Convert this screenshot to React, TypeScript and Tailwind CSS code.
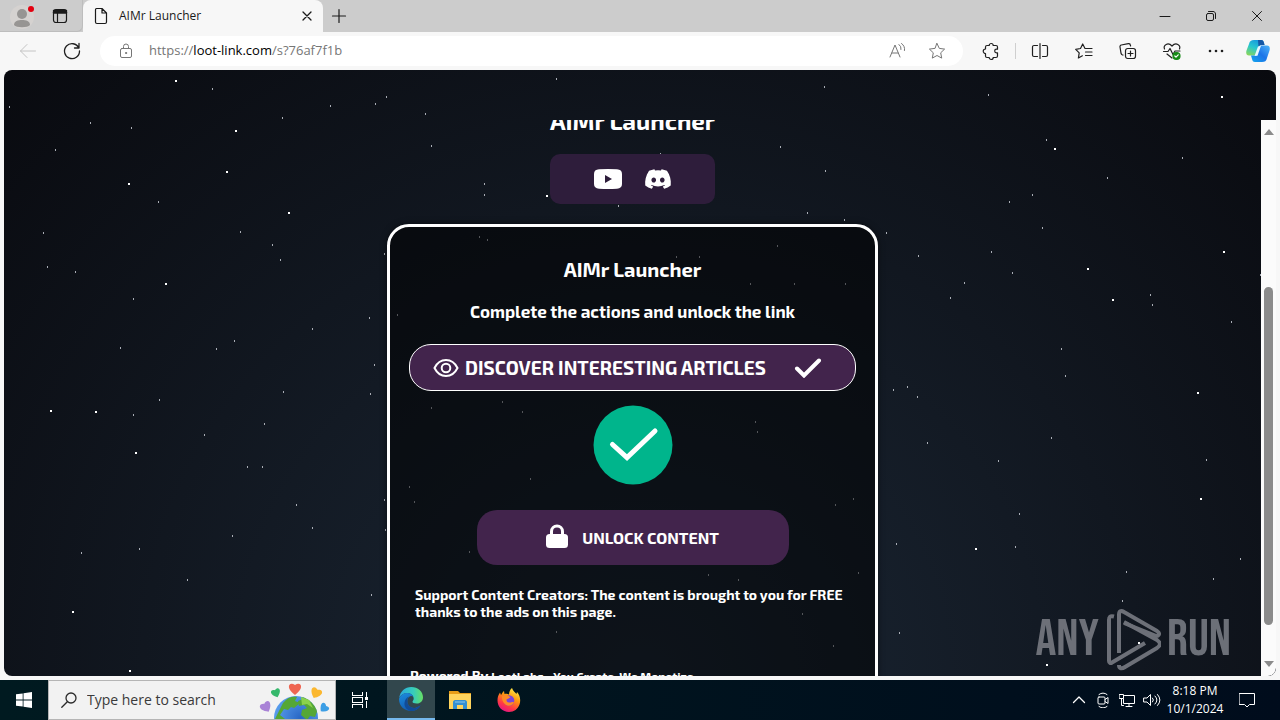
import type { ReactNode } from 'react';
import { FaDiscord } from 'react-icons/fa';

type IconProps = { children: ReactNode; className?: string; box?: string; stroke?: number };

function Icon({ children, className = 'size-5', box = '0 0 20 20', stroke = 1 }: IconProps) {
  return (
    <svg
      aria-hidden="true"
      viewBox={box}
      className={`shrink-0 ${className}`}
      fill="none"
      stroke="currentColor"
      strokeWidth={stroke}
      strokeLinecap="round"
      strokeLinejoin="round"
    >
      {children}
    </svg>
  );
}

const brightStars = [
  [176, 81], [236, 131], [227, 172], [129, 184], [289, 213], [166, 284], [51, 411], [96, 412], [136, 453],
  [130, 671], [73, 612], [547, 196], [1222, 97], [1055, 149], [1224, 252], [1088, 269], [1113, 300],
  [1198, 393], [1201, 499], [976, 549], [1047, 665], [1139, 643],
];

const smallStars = [
  [212, 89], [9, 107], [90, 123], [330, 106], [375, 104], [386, 97], [282, 118], [556, 79], [824, 87], [988, 95],
  [431, 146], [484, 184], [484, 195], [425, 114], [131, 128], [55, 150], [158, 202], [43, 233], [47, 267],
  [240, 232], [272, 245], [280, 260], [75, 272], [133, 299], [312, 329], [369, 318], [234, 341], [216, 349],
  [120, 348], [374, 365], [370, 394], [283, 392], [133, 415], [204, 435], [159, 400], [384, 500], [385, 530],
  [264, 424], [247, 467], [262, 467], [296, 505], [312, 528], [232, 536], [81, 553], [187, 580], [139, 549],
  [371, 595], [780, 147], [825, 171], [807, 213], [844, 220], [1046, 140], [1182, 158], [1107, 178], [1009, 202],
  [1032, 195], [1042, 228], [886, 233], [918, 256], [991, 252], [1012, 273], [964, 283], [1150, 295], [1260, 275],
  [950, 298], [1152, 305], [1231, 322], [1061, 349], [1065, 376], [893, 390], [907, 387], [917, 397], [927, 443],
  [1051, 438], [998, 461], [1206, 460], [1019, 514], [1015, 547], [1126, 572], [896, 544], [1240, 559],
  [899, 633], [1213, 579], [1122, 601], [660, 154], [618, 206], [479, 237], [487, 240], [777, 246], [676, 257],
  [699, 257], [750, 284], [794, 284], [845, 284], [397, 315], [431, 408], [502, 402], [522, 412], [755, 422],
  [757, 432], [409, 487], [414, 502], [530, 479], [835, 505], [853, 499], [469, 552], [708, 575], [738, 580],
  [858, 573], [802, 614], [833, 646], [556, 632], [384, 254],
];

function Stars() {
  return (
    <svg aria-hidden="true" className="absolute inset-0 size-full" shapeRendering="crispEdges">
      {smallStars.map(([x, y]) => (
        <rect key={`${x}-${y}`} x={x - 4} y={y - 71} width="1" height="2" fill="#a9adb5" />
      ))}
      {brightStars.map(([x, y]) => (
        <rect key={`${x}-${y}`} x={x - 5} y={y - 71} width="2" height="2" fill="#fff" />
      ))}
    </svg>
  );
}

function TitleBar() {
  return (
    <header className="flex h-8 shrink-0 items-stretch bg-[#cccccc] text-[#1a1a1a]">
      <div className="flex w-[83px] items-center gap-6 rounded-br-md border-r border-b border-[#bdbdbd] pl-2.5">
        <button aria-label="Profile" className="shrink-0">
          <svg viewBox="0 0 24 28" className="h-7 w-6">
            <circle cx="12" cy="15" r="12" fill="#d5d2d0" />
            <circle cx="12" cy="12" r="5" fill="#979593" />
            <path d="M4 23c0-4 4-5 8-5s8 1 8 5c-2 3-14 3-16 0z" fill="#979593" />
            <circle cx="21" cy="7" r="3" fill="#e3000f" />
          </svg>
        </button>
        <button aria-label="Tab actions menu" className="-ml-2">
          <Icon className="size-5" stroke={1.2}>
            <rect x="3.500" y="3.500" width="13" height="13" rx="2.500" />
            <path d="M4 5h12M4 6.500h12" strokeWidth="2.500" />
            <path d="M7.500 7v9" />
          </Icon>
        </button>
      </div>
      <div className="flex w-60 items-center rounded-t-lg bg-[#f7f7f7] pr-2 pl-2">
        <Icon className="size-5" stroke={1.2}>
          <path d="M5.500 2.500h5.500l4.500 4.500v9c0 .8-.7 1.500-1.500 1.500H6c-.8 0-1.500-.7-1.500-1.500V4c0-.8.500-1.500 1-1.500zM11 2.700V7h4.300" />
        </Icon>
        <span className="ml-2 flex-1 text-xs">AIMr Launcher</span>
        <button aria-label="Close tab">
          <Icon className="size-4" box="0 0 16 16" stroke={1.3}>
            <path d="M4 4l8 8M12 4l-8 8" />
          </Icon>
        </button>
      </div>
      <button aria-label="New tab" className="pl-2">
        <Icon className="size-4" box="0 0 16 16" stroke={1.200}>
          <path d="M8 1.500v13M1.500 8h13" />
        </Icon>
      </button>
      <div className="ml-auto flex items-center">
        <button aria-label="Minimize" className="flex w-[46px] justify-center">
          <Icon className="size-3" box="0 0 12 12"><path d="M1 6.500h10" /></Icon>
        </button>
        <button aria-label="Restore" className="flex w-[46px] justify-center">
          <Icon className="size-3" box="0 0 12 12">
            <rect x="1.500" y="3.500" width="7" height="7" rx="1.500" />
            <path d="M3.500 1.500H8c1.500 0 2.500 1 2.500 2.500v4.500" />
          </Icon>
        </button>
        <button aria-label="Close" className="flex w-[46px] justify-center">
          <Icon className="size-3" box="0 0 12 12"><path d="M1.500 1.500l9 9M10.500 1.500l-9 9" /></Icon>
        </button>
      </div>
    </header>
  );
}

function Toolbar() {
  return (
    <nav aria-label="Browser toolbar" className="flex h-[38px] shrink-0 items-center bg-[#f7f7f7] pl-[18px] text-[#1f1f1f]">
      <button aria-label="Back" className="text-[#c4c4c4]">
        <Icon className="size-5"><path d="M2.500 10h15M9 3.500L2.500 10 9 16.500" /></Icon>
      </button>
      <button aria-label="Refresh" className="ml-6">
        <Icon className="size-5" stroke={1.3}>
          <path d="M16.800 7A7.500 7.500 0 1 0 17.500 10M17 2.500V7h-4.500" />
        </Icon>
      </button>
      <div className="ml-[18px] flex h-[30px] flex-1 items-center rounded-full bg-white px-4 text-[#767676]">
        <button aria-label="Site information">
          <Icon className="size-5">
            <rect x="4.500" y="7.500" width="11" height="9" rx="1.500" />
            <path d="M7.500 7.500V5.500a2.500 2.500 0 0 1 5 0v2" />
            <circle cx="10" cy="12" r=".6" fill="currentColor" />
          </Icon>
        </button>
        <div className="ml-[13px] flex-1 text-[13px]">
          https://<span className="text-black">loot-link.com</span>/s?76af7f1b
        </div>
        <button aria-label="Read aloud">
          <Icon className="size-5">
            <path d="M3 16L8 4l5 12M5 12h6M12 3.500a5 5 0 0 1 2 5M14.500 2.500a7 7 0 0 1 3 7" />
          </Icon>
        </button>
        <button aria-label="Add to favorites" className="ml-5">
          <Icon className="size-5">
            <path d="M10 2.500l2.300 4.900 5.300.7-3.900 3.700 1 5.300L10 14.500l-4.700 2.600 1-5.300-3.900-3.700 5.300-.7z" />
          </Icon>
        </button>
      </div>
      <button aria-label="Extensions" className="ml-[18px]">
        <Icon className="size-5" stroke={1.2}>
          <path d="M6 4.500h2.200a2 2 0 0 1 4 0H15c.8 0 1.500.7 1.500 1.500v2.200h-1a1.800 1.800 0 0 0 0 3.600h1V15c0 .8-.7 1.500-1.500 1.500h-2.800a2 2 0 0 1-4 0H6c-.8 0-1.500-.7-1.500-1.500v-2.500a2.200 2.200 0 0 1 0-4.500V6c0-.8.700-1.500 1.500-1.500z" />
        </Icon>
      </button>
      <div className="ml-3.5 h-4 w-px bg-[#cfcfcf]" />
      <div className="ml-3.5 flex items-center gap-6">
        <button aria-label="Split screen">
          <Icon className="size-5" stroke={1.2}>
            <path d="M7.500 4.500H4C3.200 4.500 2.500 5 2.500 6v8c0 1 .7 1.500 1.500 1.500h3.500M12.500 4.500H16c.8 0 1.500.5 1.500 1.500v8c0 1-.7 1.500-1.500 1.500h-3.500M10 2.500v15" />
          </Icon>
        </button>
        <button aria-label="Favorites">
          <Icon className="size-5" stroke={1.2}>
            <path d="M16 7.500h-5L8.700 3 6.500 7.500l-4.800.8 3.500 3.500-.8 5.200 4-2.200M12 7.500h6M11.500 11H18M11.500 14.500H18" />
          </Icon>
        </button>
        <button aria-label="Collections">
          <Icon className="size-5" stroke={1.2}>
            <rect x="7.500" y="7.500" width="10" height="10" rx="2.200" />
            <path d="M12.500 10v5M10 12.500h5M5 14l-.8-.2c-.8-.3-1-1-1.200-1.600L2 6c-.2-1 .3-1.800 1.300-2l7-1.400c1-.2 1.800.3 2 1.300l.3 1.100" />
          </Icon>
        </button>
        <button aria-label="Browser essentials">
          <Icon className="size-5" stroke={1.2}>
            <path d="M2.500 8C1 4 6 .8 10 5c4-4.200 9-1 7.500 3M1.500 10.500H6l2-3 3 6 2-3.500h5M5 13l5 4" />
            <circle cx="14.500" cy="15" r="3.500" fill="#168a16" stroke="#168a16" />
            <path d="M12.800 15l1.200 1.200 2.200-2.400" stroke="#fff" />
          </Icon>
        </button>
        <button aria-label="Settings and more">
          <Icon className="size-5">
            <g fill="currentColor" stroke="none">
              <circle cx="4" cy="10" r="1.300" /><circle cx="10" cy="10" r="1.300" /><circle cx="16" cy="10" r="1.300" />
            </g>
          </Icon>
        </button>
      </div>
      <button aria-label="Copilot" className="mr-2.5 ml-5">
        <svg viewBox="0 0 24 24" className="size-6">
          <defs>
            <linearGradient id="copA" x1="0.700" y1="0" x2="0.200" y2="1">
              <stop offset="0" stopColor="#1595df" /><stop offset=".5" stopColor="#27c7cf" /><stop offset="1" stopColor="#87d65d" />
            </linearGradient>
            <linearGradient id="copB" x1="1" y1="0" x2="0" y2="1">
              <stop offset="0" stopColor="#4eb6fa" /><stop offset=".5" stopColor="#1d74e8" /><stop offset="1" stopColor="#12a7ee" />
            </linearGradient>
          </defs>
          <path d="M8 1h7c2 0 2.500 1 3 3l.5 2h-3c-2 0-2.500 1-3 3l-1.500 5c-.7 2-1.500 2.500-3.500 2.500H3c-2.500 0-3.300-2-2.500-5L3 5c.8-3 2-4 5-4z" fill="url(#copA)" />
          <path d="M12 1h3c2 0 2.500 1 3 3l.5 2h-3c-1.500 0-2.300.8-3 2z" fill="#1557a5" />
          <path d="M16 23H9c-2 0-2.500-1-3-3l-1-3.500h3c2 0 2.700-1 3.300-3L13 9c.7-2 1.500-2.500 3.500-2.500H21c2.500 0 3.300 2 2.500 5L21 19c-.8 3-2 4-5 4z" fill="url(#copB)" />
          <path d="M12 7.500l3-.8-3.500 10-3 .3z" fill="#e8f9ff" />
        </svg>
      </button>
    </nav>
  );
}

function Scrollbar() {
  return (
    <div aria-hidden="true" className="flex w-[15px] shrink-0 flex-col items-center rounded-br-lg bg-[#fbfbfb] py-2">
      <svg viewBox="0 0 10 8" className="h-2 w-2.5"><path d="M5 1l5 6H0z" fill="#8b8b8b" /></svg>
      <div className="grow-[151]" />
      <div className="w-[9px] grow-[338] rounded-full bg-[#8b8b8b]" />
      <div className="grow-[35]" />
      <svg viewBox="0 0 10 8" className="h-2 w-2.5"><path d="M5 7L0 1h10z" fill="#8b8b8b" /></svg>
    </div>
  );
}

function Watermark() {
  return (
    <div className="absolute right-[45px] bottom-0 flex h-[72px] items-center gap-1.5 font-['Bebas_Neue','Oswald','Roboto_Condensed','Open_Sans_Condensed','Liberation_Sans_Narrow','Liberation_Sans',sans-serif] text-[52px] leading-none text-[#777a82] opacity-90">
      <span>ANY</span>
      <svg aria-hidden="true" viewBox="0 0 56 64" className="h-16 w-14" fill="none" stroke="currentColor" strokeWidth="4" strokeLinejoin="round">
        <path d="M9 8.500C5 7.500 4 9 4 12v41c0 2 1.500 2.500 3 1.500L40 35" />
        <path d="M14 45V7c0-4 2-5 5-3l33 19c4 3 1 6-2 4.500L19 15" />
        <path d="M14 57c0 4 3 4 6 2l32-19c4-3 4-5 0-8L19 14" />
      </svg>
      <span>RUN</span>
    </div>
  );
}

function WebPage() {
  return (
    <div className="relative mx-1 mb-1 flex min-h-0 flex-1 overflow-hidden rounded-lg bg-[radial-gradient(ellipse_at_bottom,#1b2735_0%,#090a0f_100%)] pt-[50px] font-['Exo_2','Open_Sans','Noto_Sans',sans-serif] text-white">
      <Stars />
      <main className="relative flex flex-1 flex-col items-center overflow-hidden">
        <h1 className="-mt-4 shrink-0 text-2xl leading-[34px] font-bold">AIMr Launcher</h1>
        <div className="mt-4 flex h-[50px] w-[165px] shrink-0 items-center justify-center gap-[22px] rounded-[10px] bg-[#2e1d3b]">
          <a href="#youtube" aria-label="YouTube">
            <svg viewBox="0 0 28 20" className="h-5 w-7">
              <path fillRule="evenodd" fill="#fff" d="M5 .3Q14-.3 23 .3Q28 .6 28 5v10q0 4.400-5 4.700q-9 .6-18 0Q0 19.400 0 15V5Q0 .6 5 .3zM11 6v8l7-4z" />
            </svg>
          </a>
          <a href="#discord" aria-label="Discord"><FaDiscord className="size-7" /></a>
        </div>
        <section className="mt-5 flex w-[491px] max-w-full shrink-0 flex-col rounded-[22px] border-[3px] border-white bg-black/50 px-[19px] shadow-[0_0_6px_#00000080]">
          <h2 className="mt-[26px] text-center text-[20px] leading-8 font-bold">AIMr Launcher</h2>
          <p className="mt-3 text-center text-[17px] leading-7 font-bold">Complete the actions and unlock the link</p>
          <button className="mt-[19px] flex h-[47px] items-center rounded-[22px] border border-white bg-[#42244c] px-[23px]">
            <svg aria-hidden="true" viewBox="0 0 26 20" className="h-5 w-[26px] shrink-0" fill="none" stroke="#fff" strokeWidth="2">
              <path d="M1.500 10C4 5 8 2 13 2s9 3 11.500 8C22 15 18 18 13 18S4 15 1.500 10z" />
              <circle cx="13" cy="10" r="4.300" />
            </svg>
            <span className="ml-1.5 text-[19px] leading-6 font-bold whitespace-nowrap">DISCOVER INTERESTING ARTICLES</span>
            <svg aria-hidden="true" viewBox="0 0 28 20" className="ml-auto mr-2.5 h-5 w-7 shrink-0" fill="none" stroke="#fff" strokeWidth="4" strokeLinecap="round">
              <path d="M3 10.500l7 7L25 2.500" />
            </svg>
          </button>
          <svg role="img" aria-label="Completed" viewBox="0 0 80 80" className="mt-3.5 size-20 self-center">
            <circle cx="40" cy="40" r="39.500" fill="#00b58c" />
            <path d="M19.500 39.500l14.500 13L62 26" fill="none" stroke="#fff" strokeWidth="5" strokeLinecap="round" />
          </svg>
          <button className="mt-[25px] flex h-[55px] w-[312px] items-center justify-center gap-3.5 self-center rounded-[20px] bg-[#42244c]">
            <svg aria-hidden="true" viewBox="0 0 22 24" className="mb-1 h-6 w-[22px]">
              <rect y="10" width="22" height="14" rx="3.500" fill="#fff" />
              <path d="M5.500 12V7.500a5.500 5.500 0 0 1 11 0V12" fill="none" stroke="#fff" strokeWidth="3" />
            </svg>
            <span className="text-base leading-5 font-bold">UNLOCK CONTENT</span>
          </button>
          <p className="mt-[21px] px-1.5 text-sm leading-[17px] font-bold">
            Support Content Creators: The content is brought to you for FREE thanks to the ads on this page.
          </p>
          <p className="mt-[46px] pb-12 pl-px text-sm leading-5 font-bold">
            Powered By <span className="text-xs">LootLabs - You Create, We Monetize</span>
          </p>
        </section>
      </main>
      <Scrollbar />
      <Watermark />
    </div>
  );
}

function SearchGlobe() {
  const heart = 'M0 6C-10-1-6-8 0-4C6-8 10-1 0 6z';
  return (
    <svg aria-hidden="true" viewBox="0 0 72 38" className="h-[38px] w-[72px] shrink-0">
      <defs>
        <radialGradient id="globe" cx=".6" cy=".5" r=".7">
          <stop offset="0" stopColor="#2866c4" /><stop offset="1" stopColor="#62a7f5" />
        </radialGradient>
        <clipPath id="globeClip"><circle cx="37" cy="37" r="22" /></clipPath>
      </defs>
      <circle cx="37" cy="37" r="22" fill="url(#globe)" />
      <g fill="#55a735" clipPath="url(#globeClip)">
        <path d="M24 22q7-8 14-6l-2 4 5 2-6 5-3-1-3 3-4-1-4 6 5 4-1 4H14zM43 15l10 4 6 9-3 8-5-1-3 4-6-5 1-5 5-2-3-3-5 1-1-5 5-2z" />
      </g>
      <path d="M42 16l8 3 4 8-6-4-5 1z" fill="#8bd24b" />
      <path d={heart} transform="translate(36 8)" fill="#ef6552" />
      <path d={heart} transform="translate(17 12) rotate(-20) scale(.75)" fill="#36b86c" />
      <path d={heart} transform="translate(57 12) rotate(25) scale(.9)" fill="#fbb72f" />
      <path d={heart} transform="translate(7 26) rotate(-30) scale(.9)" fill="#a983d6" />
      <path d={heart} transform="translate(65 27) rotate(45) scale(.75)" fill="#3c9ee5" />
    </svg>
  );
}

function Taskbar() {
  return (
    <footer className="flex h-10 shrink-0 items-stretch bg-linear-to-r from-[#001a20] to-[#000c1c] text-white">
      <button aria-label="Start" className="flex w-12 items-center justify-center">
        <svg viewBox="0 0 16 16" className="size-4" fill="#fff">
          <path d="M0 2.300L6.700 1.400V7.600H0zM7.500 1.200L16 0v7.600H7.500zM0 8.400h6.700v6.200L0 13.700zM7.500 8.400H16V16l-8.500-1.200z" />
        </svg>
      </button>
      <label className="flex w-72 items-center overflow-hidden border border-[#b5b5b5] bg-[#f2f2f2] pl-3 text-[#2b2b2b]">
        <Icon className="size-4" box="0 0 16 16" stroke={1.3}>
          <circle cx="10" cy="6" r="5" /><path d="M6.300 9.700L.8 15.200" />
        </Icon>
        <input
          type="text"
          aria-label="Search"
          placeholder="Type here to search"
          className="ml-2.5 min-w-0 flex-1 bg-transparent text-sm outline-none placeholder:text-[#3a3a3a]"
        />
        <SearchGlobe />
        <span className="w-1" />
      </label>
      <button aria-label="Task view" className="flex w-[51px] items-center justify-center pr-1">
        <svg viewBox="0 0 16 16" className="size-4" fill="none" stroke="#fff" shapeRendering="crispEdges">
          <path d="M.5 0v3.500h10V0M.5 16v-3.500h10V16M.5 5.500h10v5H.5zM14.500 0v5M14.500 9v7" />
          <path d="M13 5h3v3h-3z" fill="#fff" stroke="none" />
        </svg>
      </button>
      <button aria-label="Microsoft Edge" className="flex w-12 items-center justify-center border-b-2 border-[#76b9ed] bg-[#32474d]">
        <svg viewBox="0 0 24 24" className="size-6">
          <defs>
            <linearGradient id="edgeTop" x1="0" y1=".5" x2="1" y2=".5">
              <stop offset="0" stopColor="#2aa8df" /><stop offset=".6" stopColor="#37cdbb" /><stop offset="1" stopColor="#67df64" />
            </linearGradient>
            <linearGradient id="edgeBot" x1="0" y1="0" x2="0.500" y2="1">
              <stop offset="0" stopColor="#1b8de0" /><stop offset="1" stopColor="#1259ae" />
            </linearGradient>
          </defs>
          <path d="M.2 11C1 4.500 6 0 12.300 0 19 0 24 4.800 24 10.200c0 4-3 6.300-6.300 6.300-2.700 0-4.200-.8-4.200-1.700 0-.7 1.200-1.300 1.200-3.200C14.700 8.500 12 6 8.300 6 4.500 6 1.500 8 .2 11z" fill="url(#edgeTop)" />
          <path d="M.1 11.500C1.500 8 4.500 6 8.300 6c3 0 5.300 1.600 6 3.700-2-1.500-5.800-.3-6 4.200-.2 4.500 4 7.800 8.300 6.800l4.900-2.300C19.500 22 16 24 12 24 5 24-.5 18.500.1 11.500z" fill="url(#edgeBot)" />
          <path d="M8.300 13.900c-.2 5 5 8.300 9.500 6.500l3.900-2.200C19.500 22 16 24 12 24c-4.500-1-7-4.500-6.500-8 .3-3 2-5.500 4.500-6.500-1 1-1.700 2.500-1.700 4.400z" fill="#124b96" />
        </svg>
      </button>
      <button aria-label="File Explorer" className="flex w-[49px] items-center justify-center">
        <svg viewBox="0 0 22 20" className="h-5 w-[22px]">
          <path d="M0 1h9l2 2h11v16H0z" fill="#e79d18" />
          <path d="M0 4h22v15H0z" fill="#ffd45d" />
          <path d="M4 19v-7c0-1 1-2 2-2h10c1 0 2 1 2 2v7h-4v-4H8v4z" fill="#3590d2" />
          <path d="M6 12h10" stroke="#8dc8ef" strokeWidth="1" />
        </svg>
      </button>
      <button aria-label="Firefox" className="flex w-[49px] items-center justify-center">
        <svg viewBox="0 0 24 24" className="size-6">
          <defs>
            <linearGradient id="fox" x1=".8" y1="0" x2=".3" y2="1">
              <stop offset="0" stopColor="#fff44f" /><stop offset=".4" stopColor="#ff980e" /><stop offset=".75" stopColor="#ff3647" /><stop offset="1" stopColor="#e31587" />
            </linearGradient>
          </defs>
          <path d="M15 0c1 3 3 4 4.500 6l.5-2c3 3 4 8 2.500 12.500C21 21 17 24 12 24 5.500 24 .5 19 .5 12.500c0-3 .7-5.500 2.500-8L4 7c1-1.500 1.800-3 3-4l.5 3C9 5.500 11 6 12 6.500 12 4 13 1.500 15 0z" fill="url(#fox)" />
          <circle cx="12" cy="12.500" r="5.300" fill="#7b45d9" />
          <path d="M5 8c2-1.500 5-1.500 7 0l1.500 1.500C12 10 11 11 10 11c-1 1-.5 3 2 3.500 2 .3 3-1 5-.5-1 3-3.500 4-6 3.700C7.500 17.200 4.500 13 5 8z" fill="#ff8b25" />
        </svg>
      </button>
      <div className="ml-auto flex items-center">
        <button aria-label="Show hidden icons">
          <Icon className="size-4" box="0 0 16 16" stroke={1.3}><path d="M2.500 10.500L8 5l5.500 5.500" /></Icon>
        </button>
        <button aria-label="Meet now" className="ml-2">
          <Icon className="size-4" box="0 0 16 16">
            <rect x="3" y="5" width="7" height="7" rx="1" /><path d="M10 7.500l3-2v6l-3-2M4 2.500q4-3 8 0M4 14.500q4 3 8 0" />
          </Icon>
        </button>
        <button aria-label="Network" className="ml-2">
          <Icon className="size-4" box="0 0 16 16">
            <path d="M5.500 3.500h10v8H4.500V7M10 11.500v3M7 14.500h6M.5 2.500h4v4h-4zM2.500 6.500v7h2" />
          </Icon>
        </button>
        <button aria-label="Volume" className="ml-2">
          <Icon className="h-4 w-[18px]" box="0 0 18 16">
            <path d="M1 6h3l3.500-3.500v11L4 10H1zM9.500 6q2 2 0 4M12 4q4 4 0 8M14.500 2.500q5 5.500 0 11" />
          </Icon>
        </button>
        <div className="ml-1 w-[60px] text-center text-xs leading-[18px]">
          <div>8:18 PM</div>
          <div>10/1/2024</div>
        </div>
        <button aria-label="Notifications" className="ml-3.5 mr-[25px]">
          <Icon className="size-4" box="0 0 16 16">
            <path d="M.5 1.500h15v11h-5L8 15l-2.500-2.500h-5z" />
          </Icon>
        </button>
      </div>
    </footer>
  );
}

export default function App() {
  return (
    <div className="flex h-screen flex-col overflow-hidden bg-[#f7f7f7] font-['Segoe_UI','Open_Sans','Noto_Sans',sans-serif]">
      <TitleBar />
      <Toolbar />
      <WebPage />
      <Taskbar />
    </div>
  );
}
